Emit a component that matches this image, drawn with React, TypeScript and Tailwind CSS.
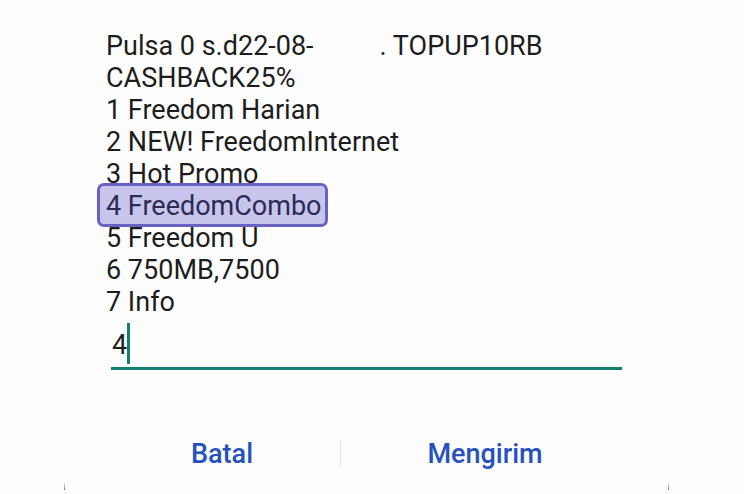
const lines = [
  'CASHBACK25%',
  '1 Freedom Harian',
  '2 NEW! FreedomInternet',
  '3 Hot Promo',
]

const lines2 = ['5 Freedom U', '6 750MB,7500', '7 Info']

export default function App() {
  return (
    <div className="w-[744px] h-[494px] bg-[#fdfdfd] overflow-hidden font-['Roboto',sans-serif] text-[#1d1d1d]">
      {/* USSD message */}
      <div className="pt-[30px] pl-[106px] text-[27px] leading-[32px]">
        <div className="whitespace-pre">
          Pulsa 0 s.d22-08-<span className="inline-block w-[66px]" />. TOPUP10RB
        </div>
        {lines.map((l) => (
          <div key={l}>{l}</div>
        ))}
        <div>
          <span className="relative text-[#2e2a55]">
            <span className="absolute -left-[9px] -right-[6px] -top-[7px] -bottom-[5px] rounded-[7px] border-[3px] border-[#6a62c2] bg-[#c7c5eb]" />
            <span className="relative">4 FreedomCombo</span>
          </span>
        </div>
        {lines2.map((l) => (
          <div key={l}>{l}</div>
        ))}
      </div>

      {/* Input */}
      <div className="ml-[111px] w-[511px] mt-[4px] h-[48px] border-b-[3px] border-[#11806f] flex items-start">
        <span className="text-[27px] leading-none ml-[1px] mt-[10px]">4</span>
        <span className="w-[3px] h-[41px] bg-[#11806f] mt-[1px]" />
      </div>

      {/* Buttons */}
      <div className="mt-[64px] flex items-center pl-[104px]">
        <div className="w-[236px] text-center text-[27px] font-medium text-[#2751be]">Batal</div>
        <div className="w-px h-[28px] bg-[#e4e4e4]" />
        <div className="w-[288px] text-center text-[27px] font-medium text-[#2751be]">Mengirim</div>
      </div>
      <div className="mt-[7px] ml-[64px] w-[605px] flex justify-between">
        <div className="w-px h-[8px] bg-gradient-to-b from-transparent to-[#777]" />
        <div className="w-px h-[8px] bg-gradient-to-b from-transparent to-[#777]" />
      </div>
    </div>
  )
}
